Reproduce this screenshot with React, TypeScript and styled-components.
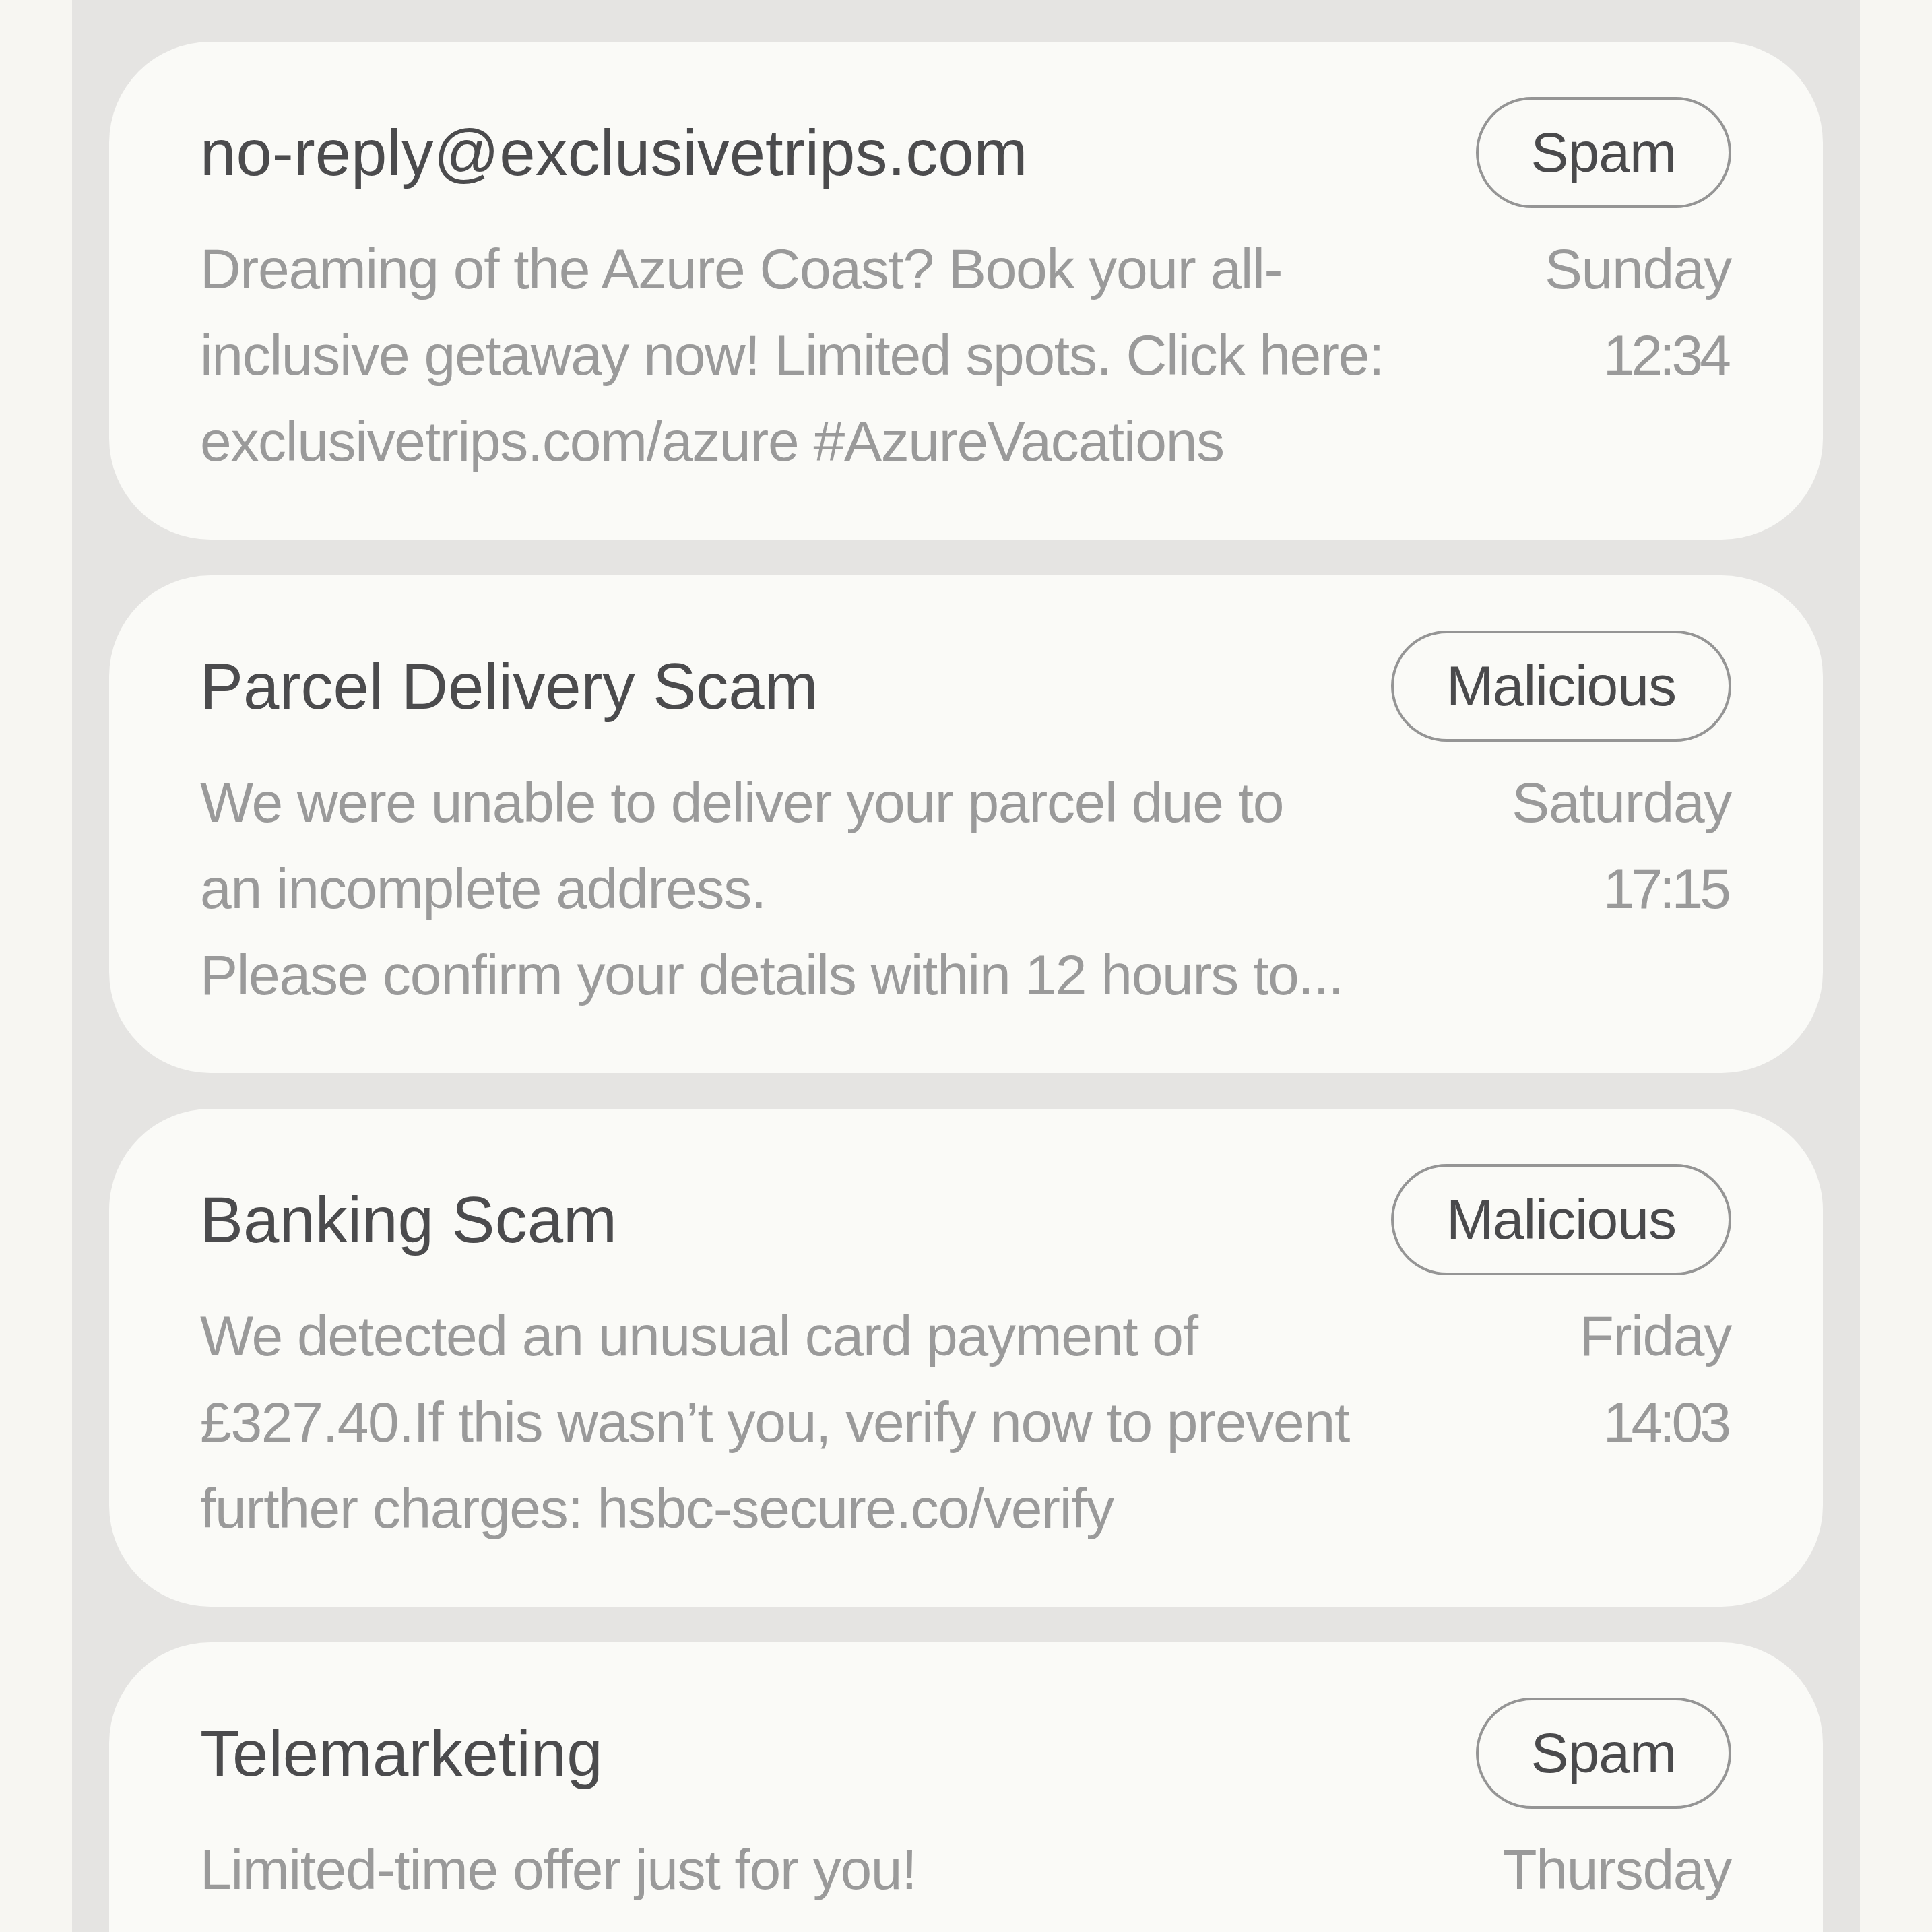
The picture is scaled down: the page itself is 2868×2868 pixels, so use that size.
import React from "react";
import styled, { createGlobalStyle } from "styled-components";

type Message = {
  id: number;
  sender: string;
  label: "Spam" | "Malicious";
  preview: React.ReactNode;
  day: string;
  time: string;
};

const messages: Message[] = [
  {
    id: 1,
    sender: "no-reply@exclusivetrips.com",
    label: "Spam",
    preview:
      "Dreaming of the Azure Coast? Book your all-inclusive getaway now! Limited spots. Click here: exclusivetrips.com/azure #AzureVacations",
    day: "Sunday",
    time: "12:34",
  },
  {
    id: 2,
    sender: "Parcel Delivery Scam",
    label: "Malicious",
    preview: (
      <>
        We were unable to deliver your parcel due to an incomplete address.
        <br />
        Please confirm your details within 12 hours to...
      </>
    ),
    day: "Saturday",
    time: "17:15",
  },
  {
    id: 3,
    sender: "Banking Scam",
    label: "Malicious",
    preview:
      "We detected an unusual card payment of £327.40.If this wasn’t you, verify now to prevent further charges: hsbc-secure.co/verify",
    day: "Friday",
    time: "14:03",
  },
  {
    id: 4,
    sender: "Telemarketing",
    label: "Spam",
    preview: (
      <>
        Limited-time offer just for you!
        <br />
        our team can cut your energy bills by 40%. Call back today to claim.
      </>
    ),
    day: "Thursday",
    time: "11:20",
  },
];

const App = () => {
  return (
    <>
      <GlobalStyle />
      <Page>
        <Column>
          {messages.map((m) => (
            <Card key={m.id}>
              <Header>
                <Sender>{m.sender}</Sender>
                <Badge>{m.label}</Badge>
              </Header>
              <Body>
                <Preview>{m.preview}</Preview>
                <When>
                  <span>{m.day}</span>
                  <Time>{m.time}</Time>
                </When>
              </Body>
            </Card>
          ))}
        </Column>
      </Page>
    </>
  );
};

export default App;

const GlobalStyle = createGlobalStyle`
  html, body {
    margin: 0;
    padding: 0;
    overflow: hidden;
    background: #f7f6f2;
  }
  body {
    font-family: "Liberation Sans", Arial, Helvetica, sans-serif;
  }
`;

const Page = styled.div`
  display: flex;
  justify-content: center;
  height: 100vh;
  overflow: hidden;
  background: #f7f6f2;
`;

const Column = styled.main`
  display: flex;
  flex-direction: column;
  gap: 53px;
  width: 2654px;
  box-sizing: border-box;
  padding: 62px 55px 0;
  background: #e5e4e2;
`;

const Card = styled.section`
  flex-shrink: 0;
  padding: 82px 136px 82px 135px;
  border-radius: 150px;
  background: #fafaf7;
`;

const Header = styled.div`
  display: flex;
  align-items: center;
  justify-content: space-between;
`;

const Sender = styled.h2`
  margin: 0;
  font-size: 96px;
  font-weight: 400;
  line-height: normal;
  color: #4b4b4d;
  white-space: nowrap;
`;

const Badge = styled.span`
  padding: 28px 78px;
  border: 4px solid #959595;
  border-radius: 999px;
  font-size: 84px;
  line-height: 101px;
  letter-spacing: -1px;
  color: #4a4a4c;
`;

const Body = styled.div`
  display: flex;
  gap: 236px;
  margin-top: 26px;
  font-size: 84px;
  line-height: 128px;
  letter-spacing: -1.3px;
  color: #9a9a9a;
`;

const Preview = styled.p`
  flex: 1;
  margin: 0;
`;

const When = styled.div`
  display: flex;
  flex-direction: column;
  align-items: flex-end;
  white-space: nowrap;
`;

const Time = styled.span`
  letter-spacing: -5px;
  margin-right: 5px;
`;
